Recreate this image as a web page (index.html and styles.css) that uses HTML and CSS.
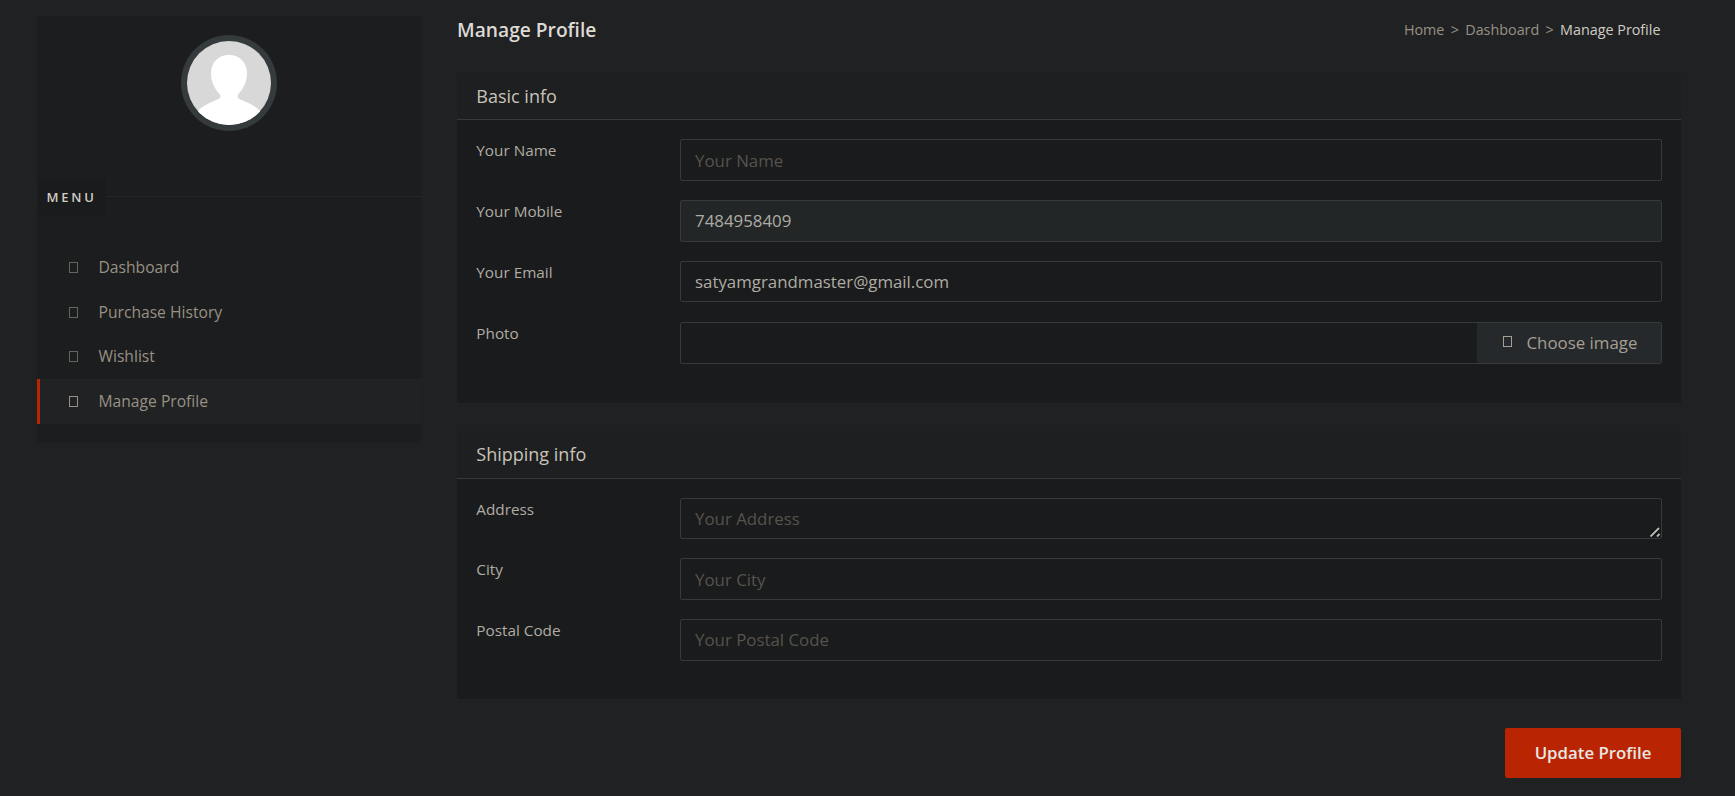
FILE: index.html
```html
<!DOCTYPE html>
<html lang="en">
<head>
<meta charset="utf-8">
<title>Manage Profile</title>
<link rel="stylesheet" href="styles.css">
</head>
<body>
<div class="page">
  <aside class="sidebar">
    <svg class="avatar" viewBox="0 0 96 96" width="96" height="96">
      <defs><clipPath id="face"><circle cx="48" cy="48" r="42"/></clipPath></defs>
      <circle cx="48" cy="48" r="48" fill="#353a3d"/>
      <g clip-path="url(#face)">
        <rect width="96" height="96" fill="#d8d8d8"/>
        <path fill="#fff" d="M48 20c11 0 18 7.500 18 18.500 0 8.500-4 15.500-8.500 20.500-1.500 2-1 4 1 5C66 67.500 74 70 80 77v19H16V77c6-7 14-9.500 21.500-13 2-1 2.500-3 1-5C34 54 30 47 30 38.500 30 27.500 37 20 48 20z"/>
      </g>
    </svg>
    <div class="menu-title"><span>MENU</span></div>
    <nav class="menu">
      <a class="item"><i class="glyph"></i>Dashboard</a>
      <a class="item"><i class="glyph"></i>Purchase History</a>
      <a class="item raised"><i class="glyph"></i>Wishlist</a>
      <a class="item active raised"><i class="glyph"></i>Manage Profile</a>
    </nav>
  </aside>
  <main class="main">
    <header class="head">
      <h1>Manage Profile</h1>
      <div class="crumbs"><span>Home</span><span>&gt;</span><span>Dashboard</span><span>&gt;</span><span class="current">Manage Profile</span></div>
    </header>
    <section class="card basic">
      <h2>Basic info</h2>
      <div class="rows">
        <div class="row"><label>Your Name</label><input class="field" placeholder="Your Name"></div>
        <div class="row"><label>Your Mobile</label><input class="field disabled raised" value="7484958409" readonly></div>
        <div class="row"><label>Your Email</label><input class="field short" value="satyamgrandmaster@gmail.com"></div>
        <div class="row"><label>Photo</label><div class="field file"><span class="choose raised"><i class="glyph"></i>Choose image</span></div></div>
      </div>
    </section>
    <section class="card shipping">
      <h2>Shipping info</h2>
      <div class="rows">
        <div class="row"><label>Address</label><textarea class="field short" placeholder="Your Address" rows="1"></textarea>
          <svg class="grip" viewBox="0 0 12 12" width="12" height="12"><path d="M1.500 10.500l8.500-8.500M7.500 10.500l2.500-2.500" fill="none" stroke="#0c0d0d" stroke-width="4"/><path d="M1.500 10.500l8.500-8.500M8 10.500l2.500-2.500" fill="none" stroke="#b5b5b5" stroke-width="2"/></svg>
        </div>
        <div class="row"><label>City</label><input class="field" placeholder="Your City"></div>
        <div class="row"><label>Postal Code</label><input class="field raised" placeholder="Your Postal Code"></div>
      </div>
    </section>
    <button class="update raised">Update Profile</button>
  </main>
</div>
</body>
</html>
```
FILE: styles.css
```css
* { box-sizing: border-box; }
body {
  margin: 0;
  height: 796px;
  overflow: hidden;
  background: #202123;
  color: #b0aca4;
  font-family: "Open Sans", sans-serif;
}
.page { display: flex; align-items: flex-start; padding: 0 54px 0 37px; }
.sidebar {
  width: 384px;
  height: 427px;
  margin: 16px 36px 0 0;
  padding-top: 19px;
  border-radius: 4px;
  background: #1c1d1e;
}
.avatar { display: block; margin: 0 auto; }
.menu-title {
  display: flex;
  align-items: center;
  height: 37px;
  margin-top: 47px;
}
.menu-title span {
  width: 69px;
  height: 37px;
  padding-left: 9.500px;
  background: #1a1b1c;
  color: #d0ccc3;
  font-size: 13px;
  font-weight: 600;
  line-height: 38px;
  letter-spacing: 2.8px;
}
.menu-title::after { content: ""; flex: 1; height: 1px; background: #242628; }
.menu { margin-top: 30px; }
.item {
  display: flex;
  align-items: center;
  height: 44.700px;
  padding-left: 32px;
  color: #989184;
  font-size: 15.65px;
}
.glyph { width: 9px; height: 11px; border: 1px solid #67645d; }
.item .glyph { margin-right: 20.500px; }
.item.active { height: 45px; padding-left: 29px; border-left: 3px solid #b92503; background: #202223; }
.active .glyph { border-color: #969288; }
.raised { padding-bottom: 2px; }
.item.raised .glyph { margin-bottom: -1px; }
.main { flex: 1; display: flex; flex-direction: column; }
.head {
  display: flex;
  align-items: center;
  justify-content: space-between;
  height: 60px;
  padding-right: 20.500px;
  margin-bottom: 13px;
}
h1, h2 { margin: 0; }
h1 { color: #dddad5; font-size: 19.2px; font-weight: 600; line-height: 60px; }
.crumbs { display: flex; gap: 6.300px; padding-bottom: 2px; color: #989184; font-size: 14.35px; }
.crumbs .current { color: #d0ccc3; }
.card { background: #1a1b1c; }
.basic { height: 330px; }
.shipping { height: 268px; margin-top: 28px; }
h2 {
  height: 47px;
  padding-left: 19.300px;
  border-bottom: 1px solid #353a3b;
  background: #1e1f20;
  color: #c8c3b9;
  font-size: 18px;
  font-weight: 400;
  line-height: 46px;
}
.shipping h2 { height: 48px; line-height: 47px; }
.rows { padding: 19px 19px 0; }
.row { position: relative; display: flex; height: 61px; }
.shipping .row:first-child { height: 60px; }
label { width: 204px; padding: 0 0 0 0.300px; font-size: 15.3px; line-height: 22px; }
.field {
  flex: 1;
  height: 42px;
  margin: 0;
  padding: 0 14px;
  border: 1px solid #353a3b;
  border-radius: 2px;
  background: #1a1b1c;
  color: #b0aca4;
  font-family: inherit;
  font-size: 16.85px;
  outline: 0;
}
.field.short { height: 41px; }
.field.raised { padding-bottom: 2px; }
.field::placeholder { color: #56534d; opacity: 1; }
textarea.field { padding-top: 8px; line-height: 23px; overflow: hidden; resize: none; }
.grip { position: absolute; right: 1px; top: 28px; }
.field.disabled { background: #222627; }
.field.file { padding: 0; }
.file { display: flex; justify-content: flex-end; }
.choose {
  display: flex;
  align-items: center;
  width: 184px;
  padding-left: 25.500px;
  background: #25292b;
  color: #a69f93;
}
.choose .glyph { margin: -1px 15px 0 0; border-color: #a69f93; }
.update {
  align-self: flex-end;
  width: 176px;
  height: 50px;
  margin-top: 29px;
  padding: 0 0 2px;
  border: 0;
  border-radius: 2px;
  background: #b92503;
  color: #e8e6e3;
  font-family: inherit;
  font-size: 16.8px;
  font-weight: 600;
}
```
